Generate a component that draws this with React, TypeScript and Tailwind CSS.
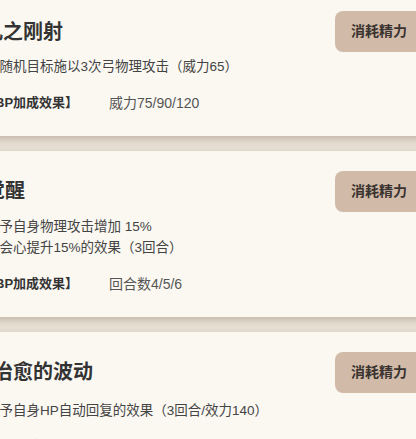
const SKILLS = [
  {
    title: "凡之刚射",
    titleOffset: "ml-[3px]",
    descGap: "mt-[4px]",
    lines: ["对随机目标施以3次弓物理攻击（威力65）"],
    bonus: "威力75/90/120",
  },
  {
    title: "觉醒",
    titleOffset: "ml-[5px]",
    descGap: "mt-[4px]",
    lines: ["赋予自身物理攻击增加 15%", "及会心提升15%的效果（3回合）"],
    bonus: "回合数4/5/6",
  },
  {
    title: "治愈的波动",
    titleOffset: "ml-[13px]",
    descGap: "mt-[7px]",
    lines: ["赋予自身HP自动回复的效果（3回合/效力140）"],
    bonus: "回合数4/5/6",
  },
];

function SkillCard({ title, titleOffset, descGap, lines, bonus }: { title: string; titleOffset: string; descGap: string; lines: string[]; bonus: string }) {
  return (
    <div className="bg-[#fbf8f2] px-[20px] pt-[20px] pb-[22px] shadow-[0_3px_6px_rgba(90,70,50,0.25)]">
      <div className="flex items-center justify-between">
        <h3 className={`${titleOffset} text-[20px] font-bold leading-[28px] text-[#333]`}>{title}</h3>
        <div className="flex h-[41px] items-center rounded-[8px] bg-[#d1bba8] px-[16px] text-[14px] font-bold text-[#3a3330]">
          消耗精力
        </div>
      </div>
      <div className={`${descGap} ml-[6px] text-[13.5px] leading-[21.5px] text-[#444]`}>
        {lines.map((l, i) => (
          <p key={i}>{l}</p>
        ))}
      </div>
      <div className="mt-[14px] ml-[2px] flex items-center leading-[22px]">
        <span className="w-[127px] text-[13px] font-bold text-[#333]">【BP加成效果】</span>
        <span className="text-[14px] text-[#555]">{bonus}</span>
      </div>
    </div>
  );
}

export default function App() {
  return (
    <div
      className="h-[439px] w-[416px] overflow-hidden bg-[#e6ded2]"
      style={{ fontFamily: '"Liberation Sans", "Noto Sans CJK SC", sans-serif' }}
    >
      <div className="-mt-[9px] -ml-[40px] flex w-[483px] flex-col gap-[15px]">
        {SKILLS.map((s, i) => (
          <SkillCard key={i} {...s} />
        ))}
      </div>
    </div>
  );
}
